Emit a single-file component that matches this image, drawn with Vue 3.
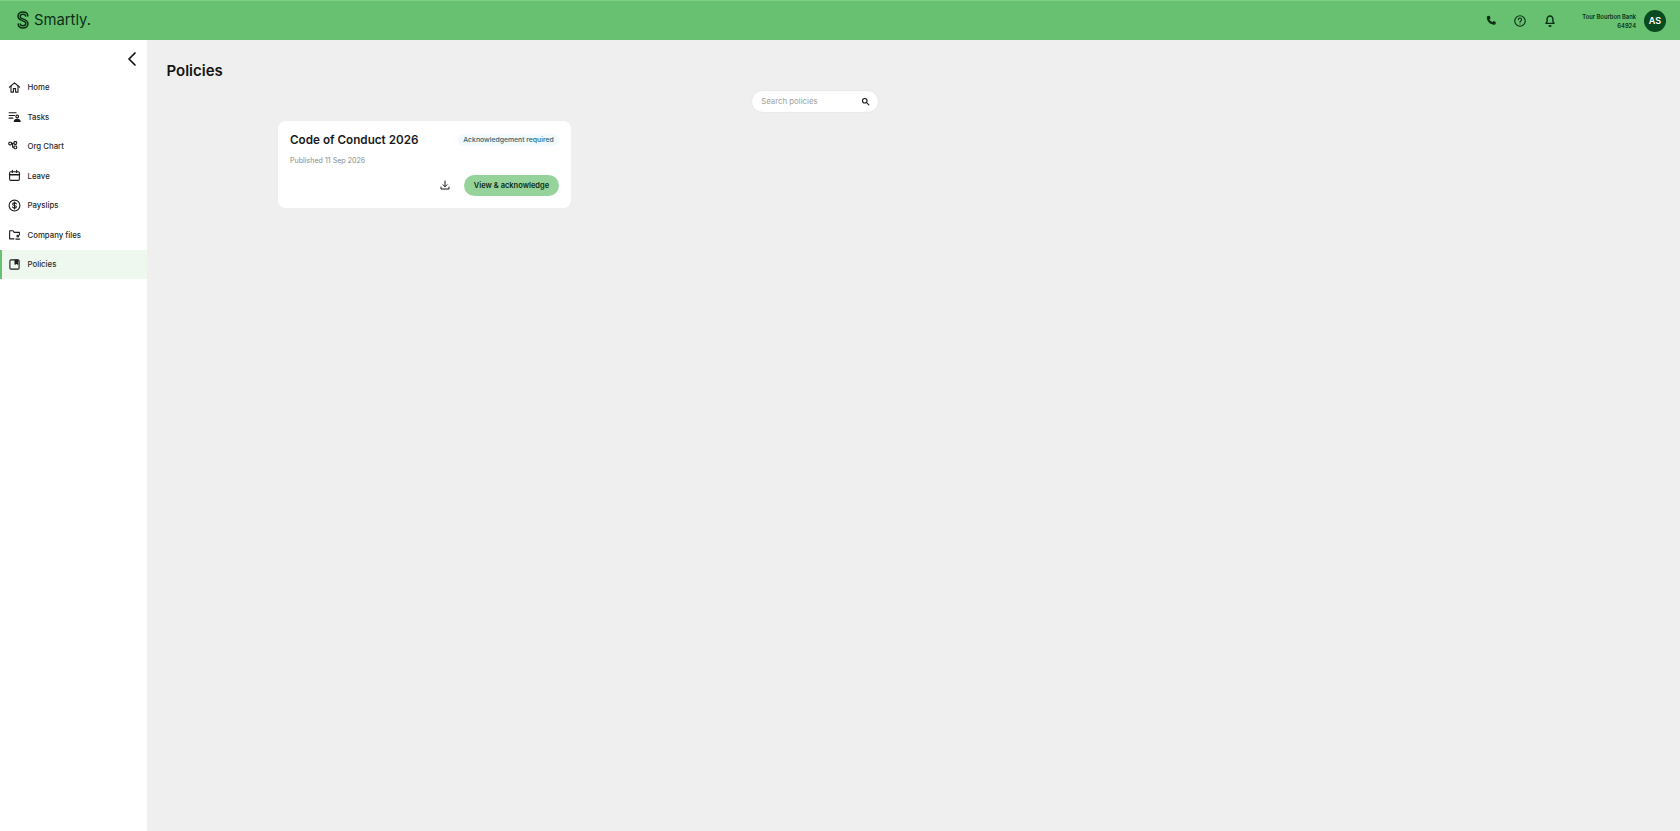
<template>
  <div class="app">
    <header class="topbar">
      <div class="brand">
        <svg class="brand-mark" viewBox="0 0 14 18" fill="none" stroke="#0a2f14" stroke-width="1.500" stroke-linecap="round">
          <path d="M11.800 5C11.800 2.600 9.800 1 7 1 4.200 1 2 2.800 2 5.200c0 2.200 1.600 3.400 4 4.400l2.500 1c1 .4 1.300 1.200 1.300 2 0 1.400-1.200 2.200-2.800 2.200-1.400 0-2.600-.8-2.800-1.900" />
          <path transform="rotate(180 7 9)" d="M11.800 5C11.800 2.600 9.800 1 7 1 4.200 1 2 2.800 2 5.200c0 2.200 1.600 3.400 4 4.400l2.500 1c1 .4 1.300 1.200 1.300 2 0 1.400-1.200 2.200-2.800 2.200-1.400 0-2.600-.8-2.800-1.900" />
        </svg>
        <span class="brand-name">Smartly.</span>
      </div>
      <div class="top-actions">
        <svg class="top-icon" viewBox="0 0 24 24" fill="#0b2f16">
          <path d="M6.600 3.500 9.700 3l1.600 4.400-2 1.700c1 2.200 2.700 3.900 4.900 4.900l1.700-2 4.400 1.600-.5 3.100c-.2 1.100-1.100 1.800-2.200 1.800C10.500 18.300 5 12.800 4.800 5.700c0-1.100.7-2 1.800-2.200Z" />
        </svg>
        <svg class="top-icon" viewBox="0 0 24 24" fill="none" stroke="#0b2f16" stroke-width="2" stroke-linecap="round">
          <circle cx="12" cy="12" r="9" />
          <path d="M9.300 9.500a2.700 2.700 0 1 1 4.200 2.300c-1 .7-1.500 1.200-1.500 2.300" />
          <path d="M12 17.100v.1" />
        </svg>
        <svg class="top-icon" viewBox="0 0 24 24" fill="none" stroke="#0b2f16" stroke-width="2.400" stroke-linejoin="round">
          <path d="M12 3.500c-3 0-5 2.200-5 5.200v4.300l-2 3h14l-2-3V8.700c0-3-2-5.200-5-5.200Z" />
          <path d="M10 19.500c.4 1 1.100 1.500 2 1.500s1.600-.5 2-1.500" />
        </svg>
        <div class="account">
          <span>Tour Bourbon Bank</span>
          <span>64924</span>
        </div>
        <div class="avatar">AS</div>
      </div>
    </header>

    <div class="body">
      <aside class="sidebar">
        <button class="collapse" aria-label="Collapse">
          <svg viewBox="0 0 10 16" fill="none" stroke="#111" stroke-width="1.700" stroke-linecap="round" stroke-linejoin="round">
            <path d="M8 2 2 8l6 6" />
          </svg>
        </button>
        <nav class="nav">
          <a v-for="item in navItems" :key="item.label" class="nav-item" :class="{ active: item.active }">
            <svg class="nav-icon" viewBox="0 0 24 24" fill="none" stroke="#1b1b1b" stroke-width="2" stroke-linecap="round" stroke-linejoin="round" v-html="item.icon"></svg>
            <span>{{ item.label }}</span>
          </a>
        </nav>
      </aside>

      <main class="content">
        <h1 class="page-title">Policies</h1>
        <div class="policies">
          <div class="search">
            <span class="search-text">Search policies</span>
            <svg class="search-icon" viewBox="0 0 24 24" fill="none" stroke="#1a1a1a" stroke-width="3" stroke-linecap="round">
              <circle cx="10" cy="10" r="6" />
              <path d="m15 15 6 6" />
            </svg>
          </div>
          <article class="card">
            <div class="card-head">
              <h2>Code of Conduct 2026</h2>
              <span class="badge">Acknowledgement required</span>
            </div>
            <p class="published">Published 11 Sep 2026</p>
            <div class="card-actions">
              <svg class="download" viewBox="0 0 24 24" fill="none" stroke="#1a1a1a" stroke-width="2" stroke-linecap="round" stroke-linejoin="round">
                <path d="M12 4v11M8 11.500l4 4 4-4" />
                <path d="M4 16v4h16v-4" />
              </svg>
              <button class="primary">View &amp; acknowledge</button>
            </div>
          </article>
        </div>
      </main>
    </div>
  </div>
</template>

<script setup>
const navItems = [
  {
    label: 'Home',
    icon: '<path d="M2.500 11.500 12 3.500l9.500 8"/><path d="M5.500 9.500v11h4.500V14h4v6.500h4.500v-11"/>',
  },
  {
    label: 'Tasks',
    icon: '<path d="M2 5h13M2 10h10M2 15h7"/><circle cx="17" cy="12" r="2.500"/><path d="M11.500 21c.5-3 2.500-4 5.500-4s5 1 5.500 4Z" fill="#1b1b1b"/>',
  },
  {
    label: 'Org Chart',
    icon: '<rect x="1.500" y="4" width="5" height="5" rx="1.500"/><rect x="11" y="3" width="5" height="5" rx="1.500"/><rect x="11" y="11" width="5" height="5" rx="1.500"/><path d="M6.500 6h4.500M8.500 6v7.500H11"/>',
  },
  {
    label: 'Leave',
    icon: '<rect x="3" y="5" width="18" height="16" rx="2"/><path d="M3 10.500h18" stroke-width="3"/><path d="M8 2.500v4M16 2.500v4"/>',
  },
  {
    label: 'Payslips',
    icon: '<circle cx="12" cy="12" r="10"/><path d="M15.500 9c-.6-1.200-1.900-1.800-3.500-1.800-2 0-3.500 1-3.500 2.400 0 3.300 7 1.400 7 4.800 0 1.400-1.500 2.400-3.500 2.400-1.700 0-3-.7-3.600-2M12 5.500v13"/>',
  },
  {
    label: 'Company files',
    icon: '<path d="M11 20H3V5h6.500l2 3H21v5"/><circle cx="18" cy="15" r="1.500"/><path d="M14.500 20.500h7"/>',
  },
  {
    label: 'Policies',
    active: true,
    icon: '<rect x="3.500" y="3.500" width="17" height="17" rx="2"/><path d="M13 4h5v7.500l-2.500-2-2.500 2Z" fill="#1b1b1b"/>',
  },
]
</script>

<style>
html,
body {
  margin: 0;
  background: #efefef;
}
</style>

<style scoped>
.app {
  height: 831px;
  display: flex;
  flex-direction: column;
  overflow: hidden;
  font-family: Inter, "Noto Sans", sans-serif;
  color: #1a1a1a;
}

.topbar {
  height: 39px;
  flex: none;
  display: flex;
  align-items: center;
  justify-content: space-between;
  padding: 0 14px 0 16px;
  background: #68c170;
  border-top: 1px solid #7fcf86;
}

.brand {
  display: flex;
  align-items: center;
  gap: 4px;
}

.brand-mark {
  width: 14px;
  height: 18px;
  margin-top: -2px;
}

.brand-name {
  font-size: 14.800px;
  line-height: 18px;
  margin-top: -1px;
  color: #0b2f16;
}

.top-actions {
  display: flex;
  align-items: center;
}

.top-icon {
  width: 14px;
  height: 14px;
  margin-right: 15.500px;
}

.account {
  width: 54px;
  display: flex;
  flex-direction: column;
  align-items: flex-end;
  margin-left: 10px;
  margin-right: 8px;
  font-size: 5.800px;
  font-weight: 600;
  line-height: 9px;
  white-space: nowrap;
  color: #0b2f16;
}

.avatar {
  width: 22px;
  height: 22px;
  border-radius: 50%;
  background: #0a4a20;
  color: #fff;
  font-size: 9px;
  font-weight: 600;
  display: flex;
  align-items: center;
  justify-content: center;
}

.body {
  flex: 1;
  display: flex;
  min-height: 0;
}

.sidebar {
  width: 147px;
  flex: none;
  background: #fff;
}

.collapse {
  display: block;
  width: 10px;
  height: 16px;
  padding: 0;
  margin: 11px 0 0 127px;
  border: 0;
  background: none;
}

.collapse svg {
  display: block;
  width: 100%;
  height: 100%;
}

.nav {
  display: flex;
  flex-direction: column;
  margin-top: 5.500px;
}

.nav-item {
  height: 29.500px;
  display: flex;
  align-items: center;
  gap: 6.500px;
  padding-left: 8px;
  font-size: 7.800px;
  font-weight: 500;
  color: #2a2a2a;
  box-sizing: border-box;
}

.nav-item.active {
  background: #eef8ef;
  border-left: 2px solid #68c170;
  padding-left: 6px;
}

.nav-icon {
  width: 13px;
  height: 13px;
  flex: none;
}

.content {
  flex: 1;
  padding: 0 19.500px;
}

.page-title {
  margin: 20.500px 0 0;
  font-size: 15px;
  line-height: 20px;
  font-weight: 600;
  color: #141414;
}

.policies {
  width: 1074px;
  margin: 10px 0 0 111.500px;
}

.search {
  width: 125.500px;
  height: 21px;
  margin: 0 auto 9px;
  box-sizing: border-box;
  display: flex;
  align-items: center;
  justify-content: space-between;
  padding: 0 8px 0 9px;
  background: #fff;
  border-radius: 11px;
  box-shadow: 0 0 2px rgba(0, 0, 0, 0.08);
}

.search-text {
  font-size: 7.800px;
  color: #a0a0a0;
}

.search-icon {
  width: 9px;
  height: 9px;
}

.card {
  width: 293px;
  height: 87px;
  box-sizing: border-box;
  padding: 11px 12px 12px;
  display: flex;
  flex-direction: column;
  background: #fff;
  border-radius: 8px;
}

.card-head {
  display: flex;
  align-items: center;
  justify-content: space-between;
  height: 16px;
}

.card-head h2 {
  margin: 0;
  font-size: 11.700px;
  font-weight: 600;
  color: #1a1a1a;
}

.badge {
  width: 101px;
  height: 12px;
  line-height: 12px;
  text-align: center;
  border-radius: 6px;
  background: #f1f9fb;
  font-size: 6.850px;
  font-weight: 500;
  color: #2f6470;
  white-space: nowrap;
}

.published {
  margin: 7px 0 0;
  font-size: 7.100px;
  line-height: 12px;
  color: #8a8a8a;
}

.card-actions {
  margin-top: auto;
  display: flex;
  align-items: center;
  justify-content: flex-end;
  gap: 13px;
}

.download {
  width: 12px;
  height: 12px;
}

.primary {
  width: 95px;
  height: 21px;
  padding: 0;
  border: 0;
  border-radius: 11px;
  background: #95d39a;
  font-family: inherit;
  font-size: 7.500px;
  font-weight: 600;
  color: #0f2a16;
}
</style>
